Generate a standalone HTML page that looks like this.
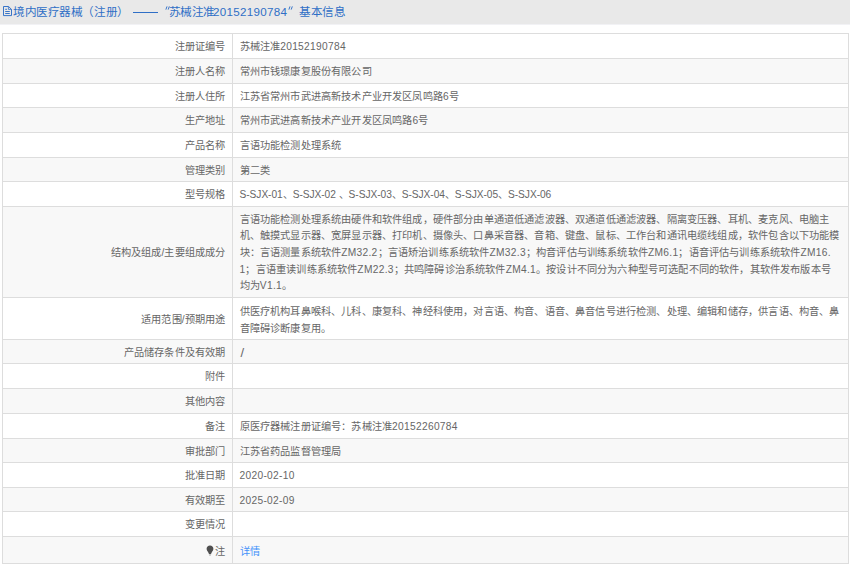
<!DOCTYPE html>
<html lang="zh-CN">
<head>
<meta charset="utf-8">
<style>
html,body{margin:0;padding:0;background:#fff;}
body{width:850px;height:566px;overflow:hidden;position:relative;font-family:"Liberation Sans",sans-serif;}
.hd{position:absolute;left:0;top:0;width:850px;height:24px;background:#e9e9e9;box-shadow:0 1px 0 #f2f2f5;}
.hd span{position:absolute;top:3.5px;font-size:11.6px;line-height:16px;color:#2f6fc6;white-space:nowrap;}
.hd svg{position:absolute;left:3px;top:6px;}
.r{position:absolute;left:3px;width:845px;box-sizing:border-box;border-top:1px solid #dddddd;background:#fff;display:flex;}
.r.g{background:#f8f8f8;}
.l,.v{display:flex;align-items:center;height:100%;box-sizing:border-box;font-size:10.2px;line-height:16.65px;color:#666;white-space:nowrap;letter-spacing:0.17px;}
.l{width:230px;justify-content:flex-end;padding-right:6.5px;border-right:1px solid #dddddd;}
.v{padding-left:6.5px;}
.l span,.v span{position:relative;top:1.8px;}
.m .v span{top:1.3px;}
.last .v span{top:2.3px;}
.r9 .v span{top:2.3px;}
.last .l span{top:2.8px;}
.r .v span span{top:0;}
.a{letter-spacing:0.31px;}
.lk{color:#4592fa;}
.pin{position:relative;top:1px;margin-right:1px;}
.bl{position:absolute;left:2px;top:33px;width:847px;height:531px;box-sizing:border-box;border-left:1px solid #dddddd;border-right:1px solid #dddddd;border-bottom:1px solid #dddddd;}
</style>
</head>
<body>
<div class="hd">
<svg width="10" height="11" viewBox="0 0 10 11"><path d="M0.5 0.5H5.6L8.5 3.4V9.6H0.5Z" fill="none" stroke="#2f6fc6" stroke-width="0.95" stroke-linejoin="round"/><path d="M5.4 0.6V3.4H8.4" fill="none" stroke="#2f6fc6" stroke-width="0.8"/><path d="M2.2 3.3H4M2.2 5.5H6.8M2.2 7.5H6.8" stroke="#2f6fc6" stroke-width="0.95"/></svg>
<span style="left:13px;letter-spacing:-0.43px">境内医疗器械（注册）</span>
<div style="position:absolute;left:132.8px;top:11.5px;width:25.2px;height:1px;background:#2f6fc6"></div>
<svg style="left:164.5px;top:6px" width="5" height="5" viewBox="0 0 5 5"><path d="M2 0.4L0.9 3.6M4.3 0.4L3.2 3.6" stroke="#2f6fc6" stroke-width="0.95" fill="none"/></svg>
<span style="left:168.5px;letter-spacing:-0.43px">苏械注准</span>
<span style="left:213px;letter-spacing:0.3px">20152190784</span>
<svg style="left:287.8px;top:6px" width="5" height="5" viewBox="0 0 5 5"><path d="M2 0.4L0.9 3.6M4.3 0.4L3.2 3.6" stroke="#2f6fc6" stroke-width="0.95" fill="none"/></svg>
<span style="left:299px;letter-spacing:-0.43px">基本信息</span>
</div>
<div class="r" style="top:33px;height:25px"><div class="l"><span>注册证编号</span></div><div class="v"><span>苏械注准<span class="a">20152190784</span></span></div></div>
<div class="r g" style="top:58px;height:25px"><div class="l"><span>注册人名称</span></div><div class="v"><span>常州市钱璟康复股份有限公司</span></div></div>
<div class="r" style="top:83px;height:24px"><div class="l"><span>注册人住所</span></div><div class="v"><span>江苏省常州市武进高新技术产业开发区凤鸣路<span class="a">6</span>号</span></div></div>
<div class="r g" style="top:107px;height:25px"><div class="l"><span>生产地址</span></div><div class="v"><span>常州市武进高新技术产业开发区凤鸣路<span class="a">6</span>号</span></div></div>
<div class="r" style="top:132px;height:25px"><div class="l"><span>产品名称</span></div><div class="v"><span>言语功能检测处理系统</span></div></div>
<div class="r g" style="top:157px;height:24px"><div class="l"><span>管理类别</span></div><div class="v"><span>第二类</span></div></div>
<div class="r" style="top:181px;height:25px"><div class="l"><span>型号规格</span></div><div class="v"><span><span style="letter-spacing:-0.05px">S-SJX-01、S-SJX-02 、S-SJX-03、S-SJX-04、S-SJX-05、S-SJX-06</span></span></div></div>
<div class="r g m" style="top:206px;height:91px"><div class="l"><span>结构及组成/主要组成成分</span></div><div class="v"><span>言语功能检测处理系统由硬件和软件组成，硬件部分由单通道低通滤波器、双通道低通滤波器、隔离变压器、耳机、麦克风、电脑主<br>机、触摸式显示器、宽屏显示器、打印机、摄像头、口鼻采音器、音箱、键盘、鼠标、工作台和通讯电缆线组成，软件包含以下功能模<br>块：言语测量系统软件<span class="a">ZM32.2</span>；言语矫治训练系统软件<span class="a">ZM32.3</span>；构音评估与训练系统软件<span class="a">ZM6.1</span>；语音评估与训练系统软件<span class="a">ZM16.</span><br><span class="a">1</span>；言语重读训练系统软件<span class="a">ZM22.3</span>；共鸣障碍诊治系统软件<span class="a">ZM4.1</span>。按设计不同分为六种型号可选配不同的软件，其软件发布版本号<br>均为<span class="a">V1.1</span>。</span></div></div>
<div class="r m r9" style="top:297px;height:42px"><div class="l"><span>适用范围/预期用途</span></div><div class="v"><span>供医疗机构耳鼻喉科、儿科、康复科、神经科使用，对言语、构音、语音、鼻音信号进行检测、处理、编辑和储存，供言语、构音、鼻<br>音障碍诊断康复用。</span></div></div>
<div class="r g" style="top:339px;height:24px"><div class="l"><span>产品储存条件及有效期</span></div><div class="v"><span><span style="font-size:13px;margin-left:1px;position:relative;top:1px">/</span></span></div></div>
<div class="r" style="top:363px;height:25px"><div class="l"><span>附件</span></div><div class="v"><span></span></div></div>
<div class="r g" style="top:388px;height:25px"><div class="l"><span>其他内容</span></div><div class="v"><span></span></div></div>
<div class="r" style="top:413px;height:25px"><div class="l"><span>备注</span></div><div class="v"><span>原医疗器械注册证编号：苏械注准<span class="a">20152260784</span></span></div></div>
<div class="r g" style="top:438px;height:24px"><div class="l"><span>审批部门</span></div><div class="v"><span>江苏省药品监督管理局</span></div></div>
<div class="r" style="top:462px;height:25px"><div class="l"><span>批准日期</span></div><div class="v"><span><span class="a">2020-02-10</span></span></div></div>
<div class="r g" style="top:487px;height:24px"><div class="l"><span>有效期至</span></div><div class="v"><span><span class="a">2025-02-09</span></span></div></div>
<div class="r" style="top:511px;height:25px"><div class="l"><span>变更情况</span></div><div class="v"><span></span></div></div>
<div class="r g last" style="top:536px;height:27px"><div class="l"><span><svg class="pin" width="8" height="11" viewBox="0 0 8 11"><path d="M4 0.4C2 0.4 0.6 1.9 0.6 3.8c0 1.6 1 2.6 1.7 3.6 0.4 0.6 0.5 1 0.6 1.5h2.2c0.1-0.5 0.2-0.9 0.6-1.5 0.7-1 1.7-2 1.7-3.6C7.4 1.9 6 0.4 4 0.4z" fill="#4f4f4f"/><path d="M2.9 9.4h2.2v0.6c0 0.3-0.3 0.5-0.6 0.5h-1c-0.3 0-0.6-0.2-0.6-0.5z" fill="#9a9a9a"/></svg>注</span></div><div class="v"><span><span class="lk">详情</span></span></div></div>
<div class="bl"></div>
</body>
</html>
